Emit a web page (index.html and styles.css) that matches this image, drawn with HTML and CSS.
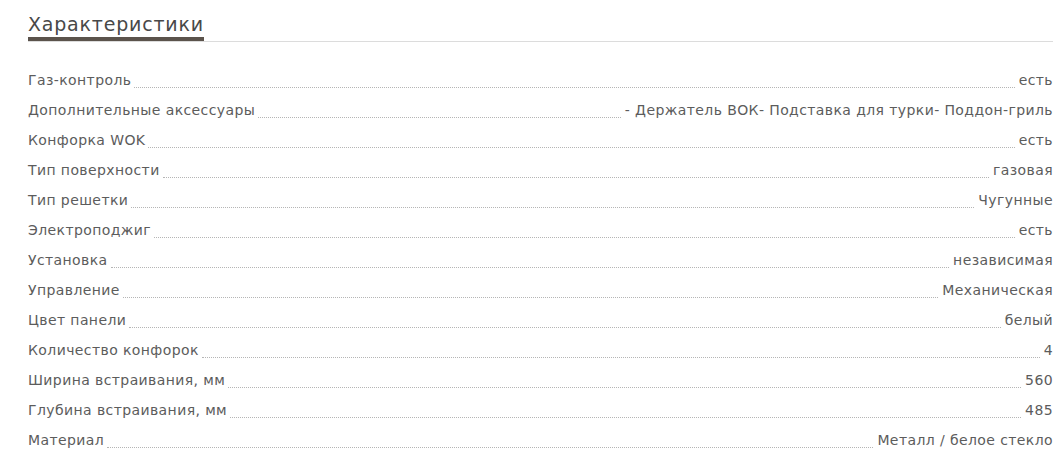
FILE: index.html
```html
<!DOCTYPE html>
<html lang="ru">
<head>
<meta charset="utf-8">
<title>Характеристики</title>
<link rel="stylesheet" href="styles.css">
</head>
<body>
<section class="specs">
  <h2 class="specs-title"><span class="specs-title-text">Характеристики</span></h2>
  <ul class="specs-list">
    <li class="spec"><span class="spec-name">Газ-контроль</span><span class="spec-dots"></span><span class="spec-value">есть</span></li>
    <li class="spec"><span class="spec-name">Дополнительные аксессуары</span><span class="spec-dots"></span><span class="spec-value">- Держатель ВОК- Подставка для турки- Поддон-гриль</span></li>
    <li class="spec"><span class="spec-name">Конфорка WOK</span><span class="spec-dots"></span><span class="spec-value">есть</span></li>
    <li class="spec"><span class="spec-name">Тип поверхности</span><span class="spec-dots"></span><span class="spec-value">газовая</span></li>
    <li class="spec"><span class="spec-name">Тип решетки</span><span class="spec-dots"></span><span class="spec-value">Чугунные</span></li>
    <li class="spec"><span class="spec-name">Электроподжиг</span><span class="spec-dots"></span><span class="spec-value">есть</span></li>
    <li class="spec"><span class="spec-name">Установка</span><span class="spec-dots"></span><span class="spec-value">независимая</span></li>
    <li class="spec"><span class="spec-name">Управление</span><span class="spec-dots"></span><span class="spec-value">Механическая</span></li>
    <li class="spec"><span class="spec-name">Цвет панели</span><span class="spec-dots"></span><span class="spec-value">белый</span></li>
    <li class="spec"><span class="spec-name">Количество конфорок</span><span class="spec-dots"></span><span class="spec-value">4</span></li>
    <li class="spec"><span class="spec-name">Ширина встраивания, мм</span><span class="spec-dots"></span><span class="spec-value">560</span></li>
    <li class="spec"><span class="spec-name">Глубина встраивания, мм</span><span class="spec-dots"></span><span class="spec-value">485</span></li>
    <li class="spec"><span class="spec-name">Материал</span><span class="spec-dots"></span><span class="spec-value">Металл / белое стекло</span></li>
  </ul>
</section>
</body>
</html>
```
FILE: styles.css
```css
html, body {
  margin: 0;
  padding: 0;
  background: #fff;
}
body {
  font-family: "DejaVu Sans", "Liberation Sans", sans-serif;
  color: #5c5c5c;
}
.specs {
  margin: 0 10px 0 28px;
  padding-top: 12px;
}
.specs-title {
  margin: 0;
  font-size: 19px;
  font-weight: 400;
  line-height: 24px;
  letter-spacing: 0.8px;
  color: #484848;
  border-bottom: 1px solid #dcdcdc;
}
.specs-title-text {
  display: inline-block;
  padding-bottom: 1px;
  border-bottom: 4px solid #5b534c;
  vertical-align: bottom;
}
.specs-list {
  list-style: none;
  margin: 17px 0 0;
  padding: 0;
}
.spec {
  display: flex;
  align-items: flex-end;
  height: 30px;
  font-size: 14px;
  line-height: 18px;
  letter-spacing: 0.4px;
}
.spec-name, .spec-value {
  white-space: nowrap;
}
.spec-dots {
  flex: 1;
  margin: 0 4px 0 3px;
  border-bottom: 1px dotted #b5b5b5;
  transform: translateY(-1px);
}
```
